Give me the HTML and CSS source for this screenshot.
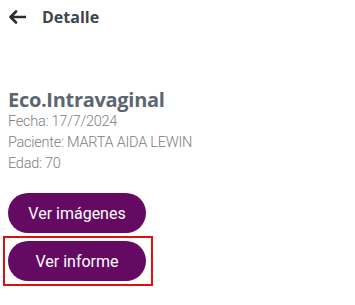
FILE: index.html
```html
<!DOCTYPE html>
<html lang="es">
<head>
  <meta charset="UTF-8">
  <meta name="viewport" content="width=device-width, initial-scale=1.0">
  <title>Detalle</title>
  <link rel="stylesheet" href="styles.css">
</head>
<body>
<header class="top-bar">
  <svg class="back-icon" width="18" height="14" viewBox="0 0 18 14" aria-hidden="true">
    <path d="M17.5 7H2.5 M8 1.5L2.5 7L8 12.5" fill="none" stroke="#263036" stroke-width="2.6" stroke-linecap="round" stroke-linejoin="round"/>
  </svg>
  <span class="top-title">Detalle</span>
</header>

<main class="detail">
  <h1 class="study-name">Eco.Intravaginal</h1>
  <div class="info">
    <div>Fecha: 17/7/2024</div>
    <div>Paciente: MARTA AIDA LEWIN</div>
    <div>Edad: 70</div>
  </div>

  <button class="pill-button images-button">Ver imágenes</button>
  <div class="highlight">
    <button class="pill-button">Ver informe</button>
  </div>
</main>
</body>
</html>
```

FILE: styles.css
```css
body {
  margin: 0;
  background: #ffffff;
  font-family: Roboto, 'Liberation Sans', sans-serif;
}

.top-bar {
  display: flex;
  align-items: center;
  height: 34px;
  padding-left: 8px;
  gap: 16px;
}

.back-icon {
  display: block;
}

.top-title {
  font-family: 'Open Sans', Roboto, sans-serif;
  font-size: 16px;
  font-weight: 700;
  color: #3b464e;
}

.detail {
  padding-top: 56px;
}

.study-name {
  margin: 0 0 0 8px;
  font-family: 'Open Sans', Roboto, sans-serif;
  font-size: 20px;
  line-height: 20px;
  font-weight: 700;
  letter-spacing: -0.3px;
  color: #5b6770;
}

.info {
  margin: 1px 0 0 8px;
  font-size: 14.5px;
  line-height: 21px;
  font-weight: 300;
  letter-spacing: -0.25px;
  color: #808080;
}

.pill-button {
  display: block;
  width: 138px;
  height: 40px;
  border: none;
  border-radius: 20px;
  background: #650a63;
  color: #ffffff;
  font-family: Roboto, 'Liberation Sans', sans-serif;
  font-size: 16px;
  padding: 0;
  cursor: pointer;
}

.images-button {
  margin: 19px 0 0 8px;
}

.highlight {
  width: fit-content;
  margin: 3px 0 0 3px;
  border: 2px solid #e01010;
  padding: 3px 5px 3px 3px;
}
```
